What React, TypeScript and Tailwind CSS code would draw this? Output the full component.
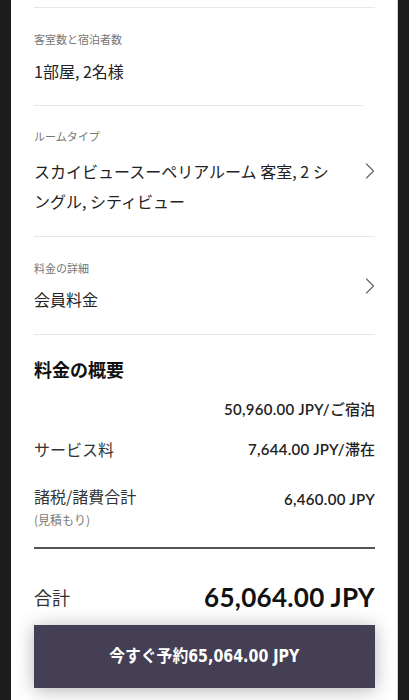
import { ChevronRight } from "lucide-react";

const jp = { fontFamily: '"Noto Sans CJK JP", "Noto Sans", sans-serif' };
const num = { fontFamily: 'Lato, "Noto Sans CJK JP", sans-serif' };

const Label = ({ children }: { children: React.ReactNode }) => (
  <p className="text-[11px] leading-4 text-[#767676]">{children}</p>
);

const Amount = ({ value, unit }: { value: string; unit?: string }) => (
  <span className="text-[15px] leading-5 text-[#222]">
    <span className="font-semibold tracking-[0.3px]" style={num}>
      {value}
    </span>
    {unit && <span className="font-medium">{unit}</span>}
  </span>
);

const PriceRow = ({ label, value, unit }: { label?: string; value: string; unit?: string }) => (
  <div className="flex items-center justify-between">
    <span className="text-[16px] leading-6 text-[#333]">{label}</span>
    <Amount value={value} unit={unit} />
  </div>
);

export default function App() {
  return (
    <div className="bg-[#1c1c1c] min-h-[700px] px-[11px]" style={jp}>
      <div className="bg-white border-r border-[#d0d0d0] min-h-[700px] pt-[7px] px-[23px] pr-[22px]">
        {/* rooms and guests */}
        <section className="border-t border-[#e6e6e6] pt-[23px] pb-[22px]">
          <Label>客室数と宿泊者数</Label>
          <p className="mt-3 text-[16px] leading-6 text-[#222]">1部屋, 2名様</p>
        </section>

        {/* room type */}
        <section className="border-t border-[#e6e6e6] mr-[12px] pt-[22px] pb-[20px]">
          <Label>ルームタイプ</Label>
          <div className="mt-3 flex items-center -mr-[12px]">
            <p className="w-[300px] text-[16px] leading-[30px] text-[#222]">
              スカイビュースーペリアルーム 客室, 2 シングル, シティビュー
            </p>
            <ChevronRight className="ml-auto -mr-[9px] -mt-[30px] text-[#666]" size={28} strokeWidth={1} />
          </div>
        </section>

        {/* rate details */}
        <section className="border-t border-[#e6e6e6] pt-[23px] pb-[23px] flex items-center">
          <div>
            <Label>料金の詳細</Label>
            <p className="mt-[11px] text-[16px] leading-6 text-[#222]">会員料金</p>
          </div>
          <ChevronRight className="ml-auto -mr-[9px] text-[#666]" size={28} strokeWidth={1} />
        </section>

        {/* summary */}
        <section className="border-t border-[#e6e6e6] pt-[21px]">
          <h2 className="text-[18px] leading-[26px] font-bold text-[#111]">料金の概要</h2>
          <div className="mt-[17px] space-y-[18px]">
            <PriceRow value="50,960.00 JPY/" unit="ご宿泊" />
            <PriceRow label="サービス料" value="7,644.00 JPY/" unit="滞在" />
          </div>
          <div className="mt-[23px] flex justify-between items-start">
            <div>
              <p className="text-[16px] leading-6 text-[#333]">諸税/諸費合計</p>
              <p className="text-[12px] leading-4 text-[#777] mt-[4px]">(見積もり)</p>
            </div>
            <span className="pt-[2px]">
              <Amount value="6,460.00 JPY" />
            </span>
          </div>
          <div className="mt-[19px] border-t-2 border-[#555]" />
          <div className="mt-[32px] flex items-center justify-between">
            <span className="text-[18px] leading-8 text-[#333]">合計</span>
            <span className="text-[26px] leading-8 font-bold text-[#111] tracking-[0.3px]" style={num}>
              65,064.00 JPY
            </span>
          </div>
        </section>

        <button
          className="mt-[12px] w-full h-[63px] bg-[#443f54] text-white text-[17px] font-bold shadow-[0_2px_18px_rgba(0,0,0,0.3)]"
          style={{ fontFamily: '"DejaVu Sans", "Noto Sans CJK JP", sans-serif' }}
        >
          <span className="inline-block font-stretch-condensed scale-x-[0.93]">今すぐ予約65,064.00 JPY</span>
        </button>
      </div>
    </div>
  );
}
